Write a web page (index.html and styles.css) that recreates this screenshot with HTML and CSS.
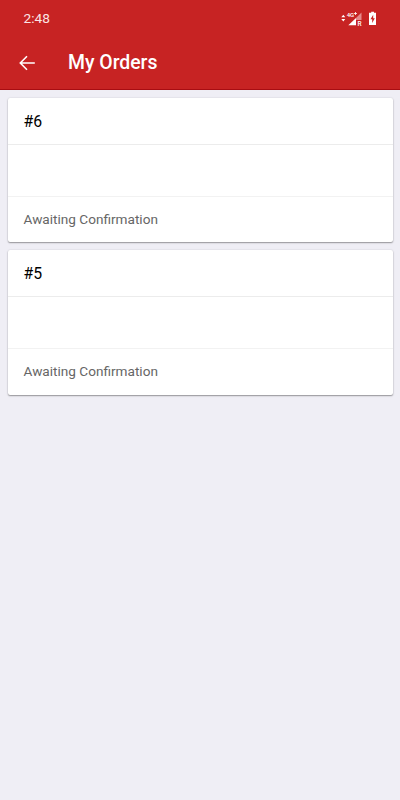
FILE: index.html
```html
<!DOCTYPE html>
<html lang="en">
<head>
<meta charset="utf-8">
<title>My Orders</title>
<link rel="stylesheet" href="styles.css">
</head>
<body>
<header class="header">
  <div class="status">
    <span class="time">2:48</span>
    <svg class="indicators" width="40" height="18" viewBox="0 0 40 18">
      <path d="M1.3 8.2 3.3 5.7 5.3 8.2ZM1.3 10 3.3 12.5 5.3 10Z" fill="#fff"/>
      <path d="M21.5 3.5V11H16V9Z" fill="#e58b8c"/>
      <path d="M16 9V16.3H8.3Z" fill="#fff"/>
      <text class="network" x="6.7" y="7.6">4G</text>
      <path d="M14 4.5H17M15.5 3V6" stroke="#fff" stroke-width=".8"/>
      <text class="roaming" x="17.4" y="16.6">R</text>
      <path fill-rule="evenodd" d="M31.2 3.7V2.8H34V3.7H36V16H29V3.7ZM33.2 5.7 30.5 10.3H32.2V14L34.8 9.3H33.2Z" fill="#fff"/>
    </svg>
  </div>
  <div class="appbar">
    <svg class="back" width="16" height="16" viewBox="0 0 16 16"><path d="M15.8 8H1.5M8 1.2 1.3 8 8 14.8" fill="none" stroke="#fff" stroke-width="1.6"/></svg>
    <h1 class="title">My Orders</h1>
  </div>
</header>
<main class="orders">
  <article class="card">
    <h2 class="number">#6</h2>
    <div class="items"></div>
    <p class="state">Awaiting Confirmation</p>
  </article>
  <article class="card">
    <h2 class="number">#5</h2>
    <div class="items"></div>
    <p class="state">Awaiting Confirmation</p>
  </article>
</main>
</body>
</html>
```
FILE: styles.css
```css
* { box-sizing: border-box; }
body {
  margin: 0;
  min-height: 800px;
  background: #efeef5;
  font-family: Roboto, sans-serif;
}
h1, h2, p { margin: 0; }
.header {
  height: 90px;
  background: #c72323;
  border-bottom: 1px solid #a80d12;
  color: #fff;
}
.status {
  display: flex;
  justify-content: space-between;
  align-items: center;
  height: 36px;
  padding: 0 20px 0 23.5px;
}
.time { font-size: 13.7px; line-height: 18px; color: #fbe5e5; }
.network { font-size: 6px; font-weight: 500; fill: #fff; }
.roaming { font-size: 6.5px; font-weight: 500; fill: #fff; }
.appbar {
  display: flex;
  align-items: center;
  gap: 33px;
  height: 53px;
  padding-left: 19px;
}
.title { font-size: 19.4px; font-weight: 500; line-height: 25px; }
.orders {
  display: flex;
  flex-direction: column;
  gap: 8px;
  padding: 8px 7px 8px 8px;
}
.card {
  height: 144.4px;
  background: #fff;
  border-radius: 2px;
  box-shadow: 0 1px 1.5px rgba(0,0,0,.36), 0 0 2px rgba(0,0,0,.12);
}
.number {
  height: 47px;
  padding-left: 15.5px;
  border-bottom: 1px solid #ececec;
  font-size: 15.8px;
  font-weight: 400;
  line-height: 47px;
  color: #000;
}
.items { height: 51.9px; border-bottom: 1px solid #f2f2f2; }
.state {
  padding-left: 15.5px;
  font-size: 13.6px;
  line-height: 45px;
  color: #666;
}
```
